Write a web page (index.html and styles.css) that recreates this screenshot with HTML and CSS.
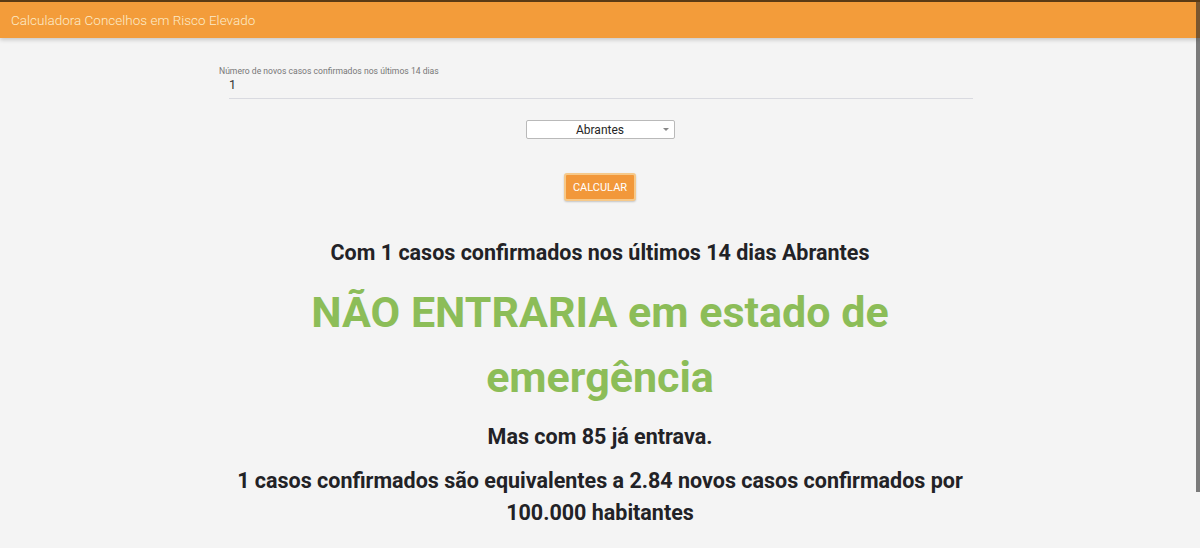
FILE: index.html
```html
<!DOCTYPE html>
<html lang="pt">
<head>
<meta charset="utf-8">
<title>Calculadora Concelhos em Risco Elevado</title>
<link rel="stylesheet" href="styles.css">
</head>
<body>
<header class="topbar">
  <span class="topbar-title">Calculadora Concelhos em Risco Elevado</span>
</header>
<main class="content">
  <div class="field">
    <label class="field-label">Número de novos casos confirmados nos últimos 14 dias</label>
    <div class="field-input">1</div>
  </div>
  <div class="select-row">
    <div class="select">
      <span class="select-value">Abrantes</span>
      <span class="select-caret"></span>
    </div>
  </div>
  <div class="button-row">
    <button class="btn">CALCULAR</button>
  </div>
  <h2 class="result-intro">Com 1 casos confirmados nos últimos 14 dias Abrantes</h2>
  <h1 class="result-main">NÃO ENTRARIA em estado de emergência</h1>
  <h2 class="result-sub">Mas com 85 já entrava.</h2>
  <h2 class="result-eq">1 casos confirmados são equivalentes a 2.84 novos casos confirmados por 100.000 habitantes</h2>
</main>
<div class="edge-bar"></div>
</body>
</html>
```

FILE: styles.css
```css
html, body {
  margin: 0;
  padding: 0;
}
body {
  background: #f4f4f4;
  font-family: Roboto, "Liberation Sans", sans-serif;
  color: #222226;
  height: 548px;
  overflow: hidden;
  position: relative;
  border-top: 2px solid #5a3a14;
}
.topbar {
  height: 36px;
  background: #f39c3a;
  display: flex;
  align-items: center;
  padding-left: 11px;
  box-shadow: 0 2px 4px rgba(0,0,0,0.18);
}
.topbar-title {
  color: #fcebc9;
  font-size: 13.5px;
  font-weight: 300;
}
.content {
  width: 762px;
  margin: 0 auto;
  padding-top: 28px;
  display: flex;
  flex-direction: column;
}
.field {
  display: flex;
  flex-direction: column;
}
.field-label {
  font-size: 8.6px;
  color: #777;
  line-height: 11px;
}
.field-input {
  margin: 1px 8px 0 10px;
  font-size: 12.5px;
  color: #333;
  line-height: 14px;
  padding-bottom: 6px;
  border-bottom: 1px solid #d9dae0;
}
.select-row {
  display: flex;
  justify-content: center;
  margin-top: 21px;
}
.select {
  width: 147px;
  height: 17px;
  background: #fff;
  border: 1px solid #b9b9b9;
  border-radius: 2px;
  display: flex;
  align-items: center;
  justify-content: center;
  position: relative;
}
.select-value {
  font-size: 12px;
  color: #262626;
}
.select-caret {
  position: absolute;
  right: 5px;
  top: 7px;
  width: 0;
  height: 0;
  border-left: 3px solid transparent;
  border-right: 3px solid transparent;
  border-top: 3px solid #888;
}
.button-row {
  display: flex;
  justify-content: center;
  margin-top: 34px;
}
.btn {
  width: 72px;
  height: 28px;
  background: #f2983a;
  border: 2px solid #f6c98a;
  border-radius: 3px;
  color: #fff;
  font-family: Roboto, "Liberation Sans", sans-serif;
  font-size: 11px;
  padding: 0;
  box-shadow: 0 1px 2px rgba(0,0,0,0.2);
}
.result-intro, .result-sub, .result-eq {
  font-size: 21.5px;
  font-weight: 700;
  text-align: center;
  margin: 0;
}
.result-intro {
  margin-top: 39px;
  line-height: 26px;
}
.result-main {
  font-size: 43px;
  font-weight: 700;
  color: #8cbd58;
  text-align: center;
  line-height: 65px;
  margin: 14px 0 0;
}
.result-sub {
  margin-top: 14px;
  line-height: 26px;
}
.result-eq {
  margin-top: 15px;
  line-height: 32px;
}
.edge-bar {
  position: absolute;
  right: 0;
  top: -2px;
  width: 4px;
  height: 492px;
  background: rgba(40, 40, 40, 0.6);
}
```
